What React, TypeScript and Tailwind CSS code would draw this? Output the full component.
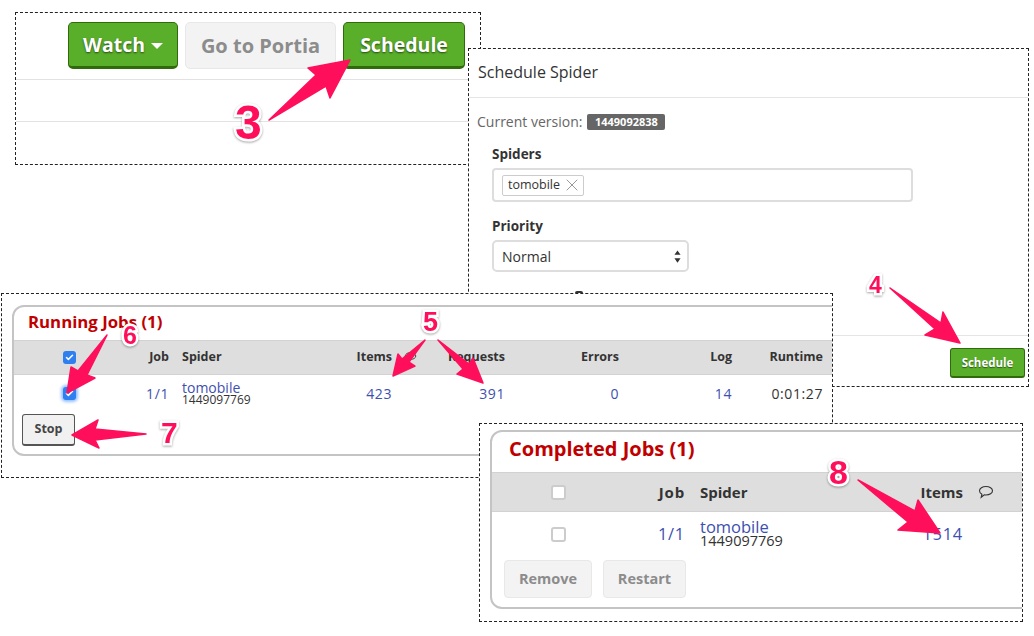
import { Check, X } from 'lucide-react';

const FONT = "font-['Open_Sans',sans-serif]";

function CommentIcon({ className }: { className: string }) {
  return (
    <svg viewBox="0 0 16 14" className={className} fill="none" stroke="#333" strokeWidth="1.1">
      <path d="M8 1.5c3.6 0 6.5 1.9 6.5 4.3S11.6 10 8 10c-.6 0-1.2 0-1.7-.1L3.2 12.3l.7-3.1C2.400 8.400 1.500 7.200 1.500 5.800 1.500 3.400 4.400 1.500 8 1.500z" />
    </svg>
  );
}

function Checkbox({ checked, glow, size }: { checked?: boolean; glow?: boolean; size: string }) {
  if (checked) {
    return (
      <span className={`${size} flex items-center justify-center rounded-[3px] bg-[#2f7ff0] ${glow ? 'shadow-[0_0_3px_2px_rgba(80,150,255,0.6)]' : ''}`}>
        <Check className="w-[9px] h-[9px] text-white" strokeWidth={4} />
      </span>
    );
  }
  return <span className={`${size} block rounded-[3px] bg-white border-2 border-[#ccc]`} />;
}

function Arrow({ points }: { points: string }) {
  return <polygon points={points} fill="#ff0f5b" stroke="#ff0f5b" strokeWidth="1.5" strokeLinejoin="round" />;
}

function Num({ value, className }: { value: string; className: string }) {
  return (
    <span className={`absolute z-30 font-['Liberation_Sans',sans-serif] font-bold leading-none text-[#ff0f5b] [-webkit-text-stroke:5px_white] [paint-order:stroke_fill] [filter:drop-shadow(0_1px_1px_rgba(0,0,0,0.35))] ${className}`}>
      {value}
    </span>
  );
}

function TopPanel() {
  const green = 'flex items-center justify-center h-[47px] rounded-[5px] bg-[#5aaf2a] border border-[#2f6a0b] border-b-[3px] text-white font-bold text-[19.5px] [text-shadow:0_1px_2px_rgba(0,0,0,0.6)]';
  return (
    <div className="absolute left-[15px] top-[12px] w-[466px] h-[153px] border border-dashed border-[#222] bg-white z-0">
      <div className="flex justify-end gap-[7px] pt-[9px] pr-[15px]">
        <button className={`${green} w-[110px] gap-[6px]`}>
          Watch
          <span className="mt-[3px] border-x-[6px] border-t-[6px] border-x-transparent border-t-white" />
        </button>
        <button className="flex items-center justify-center w-[151px] h-[47px] rounded-[5px] bg-[#f3f3f3] border border-[#e8e8e8] text-[#8c8c8c] font-bold text-[20px]">
          Go to Portia
        </button>
        <button className={`${green} w-[122px]`}>Schedule</button>
      </div>
      <div className="mt-[10px] h-[43px] border-y border-[#e2e2e2]" />
    </div>
  );
}

function SchedulePanel() {
  return (
    <div className="absolute left-[468px] top-[48px] w-[561px] h-[339px] border border-dashed border-[#222] bg-white z-10 text-[#333]">
      <div className="flex items-center h-[49px] pl-[9px] pb-[3px] border-b border-[#e5e5e5] text-[#333] text-[16px]">Schedule Spider</div>
      <div className="flex items-center gap-[5px] h-[16px] mt-[16px] pl-[8px]">
        <span className="pb-[1px] text-[14px] text-[#666]">Current version:</span>
        <span className="flex items-center justify-center w-[78px] h-[16px] rounded-[2px] bg-[#666] text-white text-[11px] font-bold">1449092838</span>
      </div>
      <div className="ml-[23px] mt-[15px] text-[13.5px] font-bold leading-[18px]">Spiders</div>
      <div className="flex items-center ml-[23px] mt-[5px] w-[421px] h-[34px] rounded-[4px] border-2 border-[#ddd] pl-[8px]">
        <span className="flex items-center gap-[2px] w-[82px] h-[21px] pl-[5px] rounded-[2px] border border-[#ccc] text-[12.5px]">
          tomobile
          <X className="w-[20px] h-[20px] text-[#999]" strokeWidth={1.2} />
        </span>
      </div>
      <div className="ml-[23px] mt-[15px] text-[13.5px] font-bold leading-[18px]">Priority</div>
      <div className="flex items-center justify-between ml-[23px] mt-[5px] w-[197px] h-[32px] rounded-[5px] border-2 border-[#ddd] pl-[8px] pr-[6px] text-[14px]">
        Normal
        <svg viewBox="0 0 8 14" className="w-[7px] h-[13px]" fill="#333">
          <path d="M4 0l3.500 5h-7zM4 14L.5 9h7z" />
        </svg>
      </div>
      <div className="mt-[63px] pt-[12px] border-t border-[#e5e5e5] flex justify-end pr-[3px]">
        <button className="flex items-center justify-center w-[75px] h-[30px] rounded-[3px] bg-[#5aaf2a] border border-[#2f6a0b] border-b-[2px] text-white font-bold text-[11.5px] [text-shadow:0_1px_1px_rgba(0,0,0,0.5)]">
          Schedule
        </button>
      </div>
    </div>
  );
}

function RunningPanel() {
  const head = 'font-bold text-[12.5px] text-[#333]';
  const link = 'text-right text-[#3d4fb0] text-[14px] tracking-[0.6px]';
  return (
    <div className="absolute left-[1px] top-[293px] w-[832px] h-[185px] border border-dashed border-[#222] bg-white overflow-hidden z-20">
      <div className="ml-[10px] mt-[11px] w-[880px] h-[151px] rounded-[12px] border-2 border-[#c4c4c4] bg-white">
        <div className="flex items-center h-[33px] pl-[14px] pb-[4px] text-[#c00000] font-bold text-[16.8px]">Running Jobs (1)</div>
        <div className="flex items-center h-[35px] bg-[#dedede] border-y border-[#d2d2d2]">
          <div className="flex justify-center w-[110px]"><Checkbox checked size="w-[13px] h-[13px]" /></div>
          <div className={`${head} text-right w-[45px]`}>Job</div>
          <div className={`${head} text-left w-[160px] ml-[13px]`}>Spider</div>
          <div className={`${head} text-right w-[50px]`}>Items</div>
          <div className={`${head} text-right w-[113px]`}>Requests</div>
          <div className={`${head} text-right w-[114px]`}>Errors</div>
          <div className={`${head} text-right w-[113px]`}>Log</div>
          <div className={`${head} text-right w-[91px]`}>Runtime</div>
        </div>
        <div className="flex items-center h-[37px]">
          <div className="flex justify-center w-[110px]"><Checkbox checked glow size="w-[13px] h-[13px]" /></div>
          <div className={`${link} w-[45px]`}>1/1</div>
          <div className="w-[160px] ml-[13px] flex flex-col">
            <span className="text-[#3d4fb0] text-[14px] leading-[12px]">tomobile</span>
            <span className="text-[#333] text-[12px] leading-[12px]">1449097769</span>
          </div>
          <div className={`${link} w-[50px]`}>423</div>
          <div className={`${link} w-[113px]`}>391</div>
          <div className={`${link} w-[114px]`}>0</div>
          <div className={`${link} w-[113px]`}>14</div>
          <div className="text-right text-[#333] text-[14px] tracking-[0.6px] w-[91px]">0:01:27</div>
        </div>
        <button className="ml-[8px] mt-[2px] flex items-center justify-center w-[53px] h-[32px] rounded-[3px] bg-[#f1f1f1] border border-[#555] border-b-[2px] text-[#444] font-bold text-[12.5px]">
          Stop
        </button>
      </div>
    </div>
  );
}

function CompletedPanel() {
  const head = 'font-bold text-[15px] text-[#333]';
  const link = 'text-right text-[#3d4fb0] text-[16.5px] tracking-[0.7px]';
  const ghost = 'flex items-center justify-center h-[38px] rounded-[4px] bg-[#f3f3f3] border border-[#e8e8e8] text-[#8c8c8c] font-bold text-[14.5px]';
  return (
    <div className="absolute left-[479px] top-[423px] w-[544px] h-[199px] border border-dashed border-[#222] bg-white overflow-hidden z-20">
      <div className="ml-[10px] mt-[6px] w-[600px] h-[179px] rounded-[12px] border-2 border-[#c4c4c4] bg-white">
        <div className="flex items-center h-[40px] pl-[17px] pb-[6px] text-[#c00000] font-bold text-[20px]">Completed Jobs (1)</div>
        <div className="flex items-center h-[40px] bg-[#dedede] border-y border-[#d2d2d2]">
          <div className="flex justify-center w-[132px]"><Checkbox size="w-[15px] h-[15px]" /></div>
          <div className={`${head} text-right tracking-[0.8px] w-[61px]`}>Job</div>
          <div className={`${head} text-left w-[180px] ml-[15px]`}>Spider</div>
          <div className={`${head} text-right w-[83px]`}>Items</div>
          <CommentIcon className="w-[16px] h-[14px] ml-[15px]" />
        </div>
        <div className="flex items-center h-[44px]">
          <div className="flex justify-center w-[132px]"><Checkbox size="w-[15px] h-[15px]" /></div>
          <div className={`${link} w-[61px]`}>1/1</div>
          <div className="w-[180px] ml-[15px] flex flex-col">
            <span className="text-[#3d4fb0] text-[16.5px] leading-[14px]">tomobile</span>
            <span className="text-[#333] text-[14.5px] leading-[14px]">1449097769</span>
          </div>
          <div className={`${link} w-[83px]`}>1514</div>
        </div>
        <div className="flex gap-[11px] ml-[12px] mt-[4px]">
          <button className={`${ghost} w-[88px]`}>Remove</button>
          <button className={`${ghost} w-[83px]`}>Restart</button>
        </div>
      </div>
    </div>
  );
}

export default function App() {
  return (
    <div className={`relative w-[1034px] h-[636px] overflow-hidden bg-white ${FONT}`}>
      <TopPanel />
      <SchedulePanel />
      <RunningPanel />
      <CompletedPanel />

      {/* comment icon under the arrow in the running table */}
      <CommentIcon className="absolute z-20 left-[404px] top-[351px] w-[13px] h-[12px]" />

      {/* bit of the panel behind that pokes out above the running jobs panel */}
      <span className="absolute z-20 left-[575px] top-[291px] w-[8px] h-[2px] rounded-t-full bg-[#333]" />

      {/* annotation arrows */}
      <svg className="absolute inset-0 z-30 w-[1034px] h-[636px]" viewBox="0 0 1034 636">
        <Arrow points="269,120 316,75 308,68 350,60 330,98 326,86" />
        <Arrow points="890,288 935,329 925,335 960,343 943,312 941,323" />
        <Arrow points="425,340 402,359 398,354 393,376 415,366 409,362" />
        <Arrow points="438,340 463,369 457,374 483,383 473,358 469,364" />
        <Arrow points="107,335 78,371 71,367 67,393 95,378 87,375" />
        <Arrow points="146,434 95,429 98,420 72,435 99,448 95,440" />
        <Arrow points="858,480 908,522 898,530 940,533 918,500 915,511" />
      </svg>

      <Num value="3" className="left-[235px] top-[99px] text-[48px]" />
      <Num value="4" className="left-[869px] top-[274px] text-[23px]" />
      <Num value="5" className="left-[423px] top-[309px] text-[27px]" />
      <Num value="6" className="left-[123px] top-[323px] text-[25px]" />
      <Num value="7" className="left-[161px] top-[418px] text-[30px]" />
      <Num value="8" className="left-[829px] top-[455px] text-[34px]" />
    </div>
  );
}
